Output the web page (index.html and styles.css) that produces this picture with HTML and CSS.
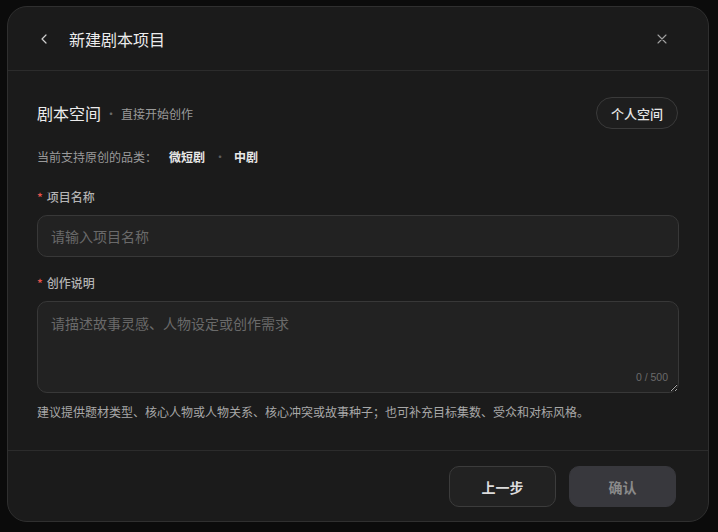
FILE: index.html
```html
<!DOCTYPE html>
<html lang="zh-CN">
<head>
<meta charset="utf-8">
<title>新建剧本项目</title>
<link rel="stylesheet" href="styles.css">
</head>
<body>
<div class="modal">
  <div class="modal-header">
    <button class="icon-btn back" aria-label="返回">
      <svg width="12" height="12" viewBox="0 0 12 12"><polyline points="7,2 3,6 7,10" fill="none" stroke="#d0d0d0" stroke-width="1.2" stroke-linecap="round" stroke-linejoin="round"/></svg>
    </button>
    <div class="title">新建剧本项目</div>
    <button class="icon-btn close" aria-label="关闭">
      <svg width="12" height="12" viewBox="0 0 12 12"><path d="M2 2 L10 10 M10 2 L2 10" fill="none" stroke="#a0a0a0" stroke-width="1.1" stroke-linecap="round"/></svg>
    </button>
  </div>
  <div class="modal-body">
    <div class="space-row">
      <div class="space-title">
        <span class="space-name">剧本空间</span>
        <span class="dot">·</span>
        <span class="space-sub">直接开始创作</span>
      </div>
      <button class="pill">个人空间</button>
    </div>
    <div class="categories">
      <span class="cat-label">当前支持原创的品类：</span>
      <span class="cat">微短剧</span>
      <span class="dot cat-dot">·</span>
      <span class="cat">中剧</span>
    </div>
    <div class="field">
      <label class="label"><span class="req">*</span>项目名称</label>
      <input class="input" type="text" placeholder="请输入项目名称">
    </div>
    <div class="field field-2">
      <label class="label"><span class="req">*</span>创作说明</label>
      <div class="textarea-wrap">
        <textarea class="textarea" placeholder="请描述故事灵感、人物设定或创作需求"></textarea>
        <span class="counter">0 / 500</span>
      </div>
    </div>
    <div class="hint">建议提供题材类型、核心人物或人物关系、核心冲突或故事种子；也可补充目标集数、受众和对标风格。</div>
  </div>
  <div class="modal-footer">
    <button class="btn btn-secondary">上一步</button>
    <button class="btn btn-primary">确认</button>
  </div>
</div>
</body>
</html>
```

FILE: styles.css
```css
* { box-sizing: border-box; }
html, body {
  margin: 0;
  padding: 0;
  background: #0b0b0b;
  width: 718px;
  height: 532px;
  overflow: hidden;
  font-family: "Noto Sans CJK SC", "Noto Sans", sans-serif;
}
body { padding: 6px 0 0 7px; }
.modal {
  width: 702px;
  height: 516px;
  background: #1b1b1b;
  border: 1px solid #2f2f2f;
  border-radius: 20px;
  display: flex;
  flex-direction: column;
  overflow: hidden;
}
.modal-header {
  height: 64px;
  flex: none;
  display: flex;
  align-items: center;
  padding: 0 38px 0 29px;
  border-bottom: 1px solid #2c2c2c;
}
.icon-btn {
  background: none;
  border: 0;
  padding: 0;
  width: 16px;
  height: 16px;
  display: flex;
  align-items: center;
  justify-content: center;
  cursor: pointer;
}
.title {
  margin-left: 16px;
  font-size: 16px;
  font-weight: 400;
  color: #ececec;
  flex: 1;
  line-height: 22px;
}
.modal-body {
  flex: 1;
  padding: 26px 30px 0 29px;
}
.space-row {
  display: flex;
  align-items: center;
  justify-content: space-between;
  height: 32px;
}
.space-title { display: flex; align-items: center; }
.space-name {
  font-size: 16px;
  color: #ececec;
  font-weight: 400;
}
.dot {
  color: #6a6a6a;
  font-size: 12px;
  margin: 0 4px 0 4px;
}
.space-sub {
  font-size: 12px;
  color: #9a9a9a;
}
.pill {
  height: 32px;
  width: 82px;
  border-radius: 16px;
  border: 1px solid #3a3a3a;
  background: #1e1e1e;
  color: #e6e6e6;
  font-family: inherit;
  font-size: 13px;
  font-weight: 500;
  padding: 0;
}
.categories {
  margin-top: 19px;
  font-size: 12px;
  line-height: 17px;
  display: flex;
  align-items: center;
}
.cat-label { color: #9a9a9a; }
.cat {
  color: #e8e8e8;
  font-weight: 700;
}
.cat-label + .cat { margin-left: 12px; }
.cat-dot { margin: 0 8px 0 9px; color: #5e5e5e; }
.field { margin-top: 23px; }
.field-2 { margin-top: 17px; }
.label {
  display: flex;
  align-items: center;
  font-size: 12px;
  line-height: 17px;
  color: #b4b4b4;
  font-weight: 500;
}
.req {
  color: #e5534b;
  margin-right: 4px;
  font-size: 12px;
}
.input {
  display: block;
  margin-top: 10px;
  width: 642px;
  height: 42px;
  background: #222222;
  border: 1px solid #383838;
  border-radius: 10px;
  padding: 0 13px;
  font-family: inherit;
  font-size: 14px;
  color: #e6e6e6;
  outline: none;
}
.input::placeholder, .textarea::placeholder { color: #6a6a6a; }
.textarea-wrap {
  position: relative;
  margin-top: 10px;
  width: 642px;
}
.textarea {
  display: block;
  width: 642px;
  height: 92px;
  background: #222222;
  border: 1px solid #383838;
  border-radius: 10px;
  padding: 11px 13px;
  font-family: inherit;
  font-size: 14px;
  line-height: 20px;
  color: #e6e6e6;
  outline: none;
  resize: vertical;
}
.counter {
  position: absolute;
  right: 11px;
  bottom: 10px;
  font-size: 10.5px;
  color: #6a6a6a;
  font-family: "Liberation Sans", Arial, sans-serif;
}
.hint {
  margin-top: 10px;
  font-size: 12px;
  line-height: 17px;
  color: #a8a8a8;
}
.modal-footer {
  flex: none;
  height: 71px;
  border-top: 1px solid #2c2c2c;
  display: flex;
  justify-content: flex-end;
  align-items: flex-start;
  padding: 15px 32px 0 0;
  gap: 13px;
}
.btn {
  width: 107px;
  height: 41px;
  border-radius: 10px;
  font-family: inherit;
  font-size: 14px;
  font-weight: 700;
  cursor: pointer;
}
.btn-secondary {
  background: #222222;
  border: 1px solid #3c3c3c;
  color: #dcdcdc;
}
.btn-primary {
  background: #38383d;
  border: 1px solid #38383d;
  color: #8a8a8a;
}
```
